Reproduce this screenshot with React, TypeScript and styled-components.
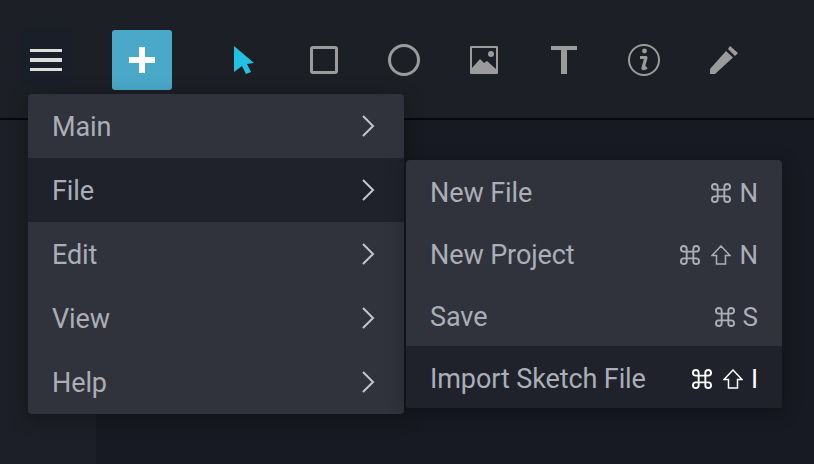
import React from 'react';
import styled, { createGlobalStyle } from 'styled-components';

const GlobalStyle = createGlobalStyle`
  html, body {
    margin: 0;
    padding: 0;
    background: #171a22;
  }
`;

const Page = styled.div`
  position: relative;
  width: 814px;
  height: 464px;
  overflow: hidden;
  display: flex;
  flex-direction: column;
  font-family: Roboto, "Liberation Sans", sans-serif;
  background: #171a22;
`;

const Toolbar = styled.div`
  flex: none;
  height: 88px;
  padding: 30px 0 0 20px;
  display: flex;
  align-items: flex-start;
  background: #1d1f26;
  border-bottom: 2px solid #07080a;
`;

const MenuButton = styled.div`
  width: 52px;
  height: 56px;
  box-sizing: border-box;
  padding-top: 4px;
  display: flex;
  flex-direction: column;
  align-items: center;
  justify-content: center;
  gap: 6px;
  background: #1a1e28;
`;

const MenuLine = styled.span`
  width: 32px;
  height: 3.5px;
  background: #dedede;
`;

const AddButton = styled.div`
  width: 60px;
  height: 60px;
  margin-left: 40px;
  border-radius: 3px;
  background: #4aa8c8;
  display: flex;
  align-items: center;
  justify-content: center;
`;

const Tools = styled.div`
  display: flex;
  margin-left: 32px;
  height: 60px;
`;

const Tool = styled.div`
  width: 80px;
  height: 60px;
  display: flex;
  align-items: center;
  justify-content: center;
  color: #9b9b9b;
`;

const Body = styled.div`
  flex: 1;
  display: flex;
`;

const Sidebar = styled.div`
  width: 96px;
  background: #1c1f27;
`;

const Canvas = styled.div`
  flex: 1;
  background: #171a22;
`;

const Menu = styled.div`
  position: absolute;
  left: 28px;
  top: 94px;
  width: 376px;
  border-radius: 4px;
  overflow: hidden;
  background: #30333c;
  box-shadow: 0 4px 20px rgba(0, 0, 0, 0.3);
`;

const SubMenu = styled.div`
  position: absolute;
  left: 406px;
  top: 160px;
  width: 376px;
  border-radius: 4px;
  overflow: hidden;
  background: #30333c;
  box-shadow: 0 4px 20px rgba(0, 0, 0, 0.3);
`;

const Row = styled.div<{ $active?: boolean; $height: number; $top: number }>`
  height: ${p => p.$height}px;
  box-sizing: border-box;
  padding: ${p => p.$top}px 24px 0;
  display: flex;
  align-items: center;
  justify-content: space-between;
  font-size: 27px;
  letter-spacing: -0.1px;
  color: #abaeb7;
  background: ${p => (p.$active ? '#1f222b' : 'transparent')};
`;

const Chevron = styled.svg`
  display: block;
  margin-right: 5px;
  margin-top: -2px;
`;

const Shortcut = styled.span<{ $active?: boolean }>`
  display: flex;
  align-items: center;
  gap: 8px;
  font-size: 26px;
  letter-spacing: 0;
  color: ${p => (p.$active ? '#ffffff' : '#abaeb7')};
`;

const KeyIcon = styled.svg`
  display: block;
`;

const ShiftIcon = styled(KeyIcon)`
  margin-left: 3px;
`;

const CommandKey = () => (
  <KeyIcon width="20" height="20" viewBox="1 1 21 21" fill="none" stroke="currentColor" strokeWidth="2">
    <path d="M8 8h7v7H8zM8 8V5a3 3 0 1 0-3 3h3M15 8V5a3 3 0 1 1 3 3h-3M8 15v3a3 3 0 1 1-3-3h3M15 15v3a3 3 0 1 0 3-3h-3" />
  </KeyIcon>
);

const ShiftKey = () => (
  <ShiftIcon width="20" height="20" viewBox="0 0 20 20" fill="none" stroke="currentColor" strokeWidth="1.5">
    <path d="M10 1 19 10.500H14.500V19H5.500V10.500H1Z" />
  </ShiftIcon>
);

const mainItems = ['Main', 'File', 'Edit', 'View', 'Help'];

const fileItems = [
  { label: 'New File', keys: ['cmd', 'N'] },
  { label: 'New Project', keys: ['cmd', 'shift', 'N'] },
  { label: 'Save', keys: ['cmd', 'S'] },
  { label: 'Import Sketch File', keys: ['cmd', 'shift', 'I'], active: true },
];

const renderKey = (key: string) => {
  switch (key) {
    case 'cmd': return <CommandKey key={key} />;
    case 'shift': return <ShiftKey key={key} />;
    default: return <span key={key}>{key}</span>;
  }
};

const App = () => (
  <Page>
    <GlobalStyle />
    <Toolbar>
      <MenuButton>
        <MenuLine />
        <MenuLine />
        <MenuLine />
      </MenuButton>
      <AddButton>
        <svg width="26" height="26" viewBox="0 0 26 26" fill="#ffffff">
          <path d="M10 0h6v10h10v6H16v10h-6V16H0v-6h10z" />
        </svg>
      </AddButton>
      <Tools>
        <Tool>
          <svg width="20" height="28" viewBox="0 0 20 28" fill="#22c1e0">
            <path d="M0 0 20 17 13 18 17 26 12 28 8 20 0 26Z" />
          </svg>
        </Tool>
        <Tool>
          <svg width="28" height="28" viewBox="0 0 28 28" fill="none" stroke="currentColor" strokeWidth="3">
            <rect x="1.500" y="1.500" width="25" height="25" rx="1.500" />
          </svg>
        </Tool>
        <Tool>
          <svg width="32" height="32" viewBox="0 0 32 32" fill="none" stroke="currentColor" strokeWidth="3">
            <circle cx="16" cy="16" r="14.500" />
          </svg>
        </Tool>
        <Tool>
          <svg width="28" height="28" viewBox="0 0 28 28" fill="currentColor">
            <path fillRule="evenodd" d="M1 0h26a1 1 0 0 1 1 1v26a1 1 0 0 1-1 1H1a1 1 0 0 1-1-1V1a1 1 0 0 1 1-1zM2 2v20l8-9 4 4 3-2 9 8V2z" />
            <circle cx="21" cy="8" r="3" />
          </svg>
        </Tool>
        <Tool>
          <svg width="26" height="28" viewBox="0 0 26 28" fill="currentColor">
            <path d="M0 0h26v4H16v24H10V4H0z" />
          </svg>
        </Tool>
        <Tool>
          <svg width="32" height="32" viewBox="0 0 32 32" fill="none" stroke="currentColor">
            <circle cx="16" cy="16" r="15" strokeWidth="2" />
            <circle cx="16.500" cy="7" r="2.400" fill="currentColor" stroke="none" />
            <path d="M12 13.500h6l-3 10.500c-.3 1 .8 1.200 3.800-.6" strokeWidth="3.200" strokeLinejoin="round" />
          </svg>
        </Tool>
        <Tool>
          <svg width="28" height="28" viewBox="0 0 28 28" fill="currentColor">
            <path d="M0 23 16 5l7 6.500L5 28H0zM18 3l2-3 8 7-3 3z" />
          </svg>
        </Tool>
      </Tools>
    </Toolbar>
    <Body>
      <Sidebar />
      <Canvas />
    </Body>
    <Menu>
      {mainItems.map(item => (
        <Row key={item} $height={64} $top={2} $active={item === 'File'}>
          <span>{item}</span>
          <Chevron width="14" height="24" viewBox="0 0 14 24" fill="none" stroke="#c4c6cc" strokeWidth="2">
            <path d="M2 2 12 12 2 22" />
          </Chevron>
        </Row>
      ))}
    </Menu>
    <SubMenu>
      {fileItems.map(item => (
        <Row key={item.label} $height={62} $top={4} $active={item.active}>
          <span>{item.label}</span>
          <Shortcut $active={item.active}>{item.keys.map(renderKey)}</Shortcut>
        </Row>
      ))}
    </SubMenu>
  </Page>
);

export default App;
